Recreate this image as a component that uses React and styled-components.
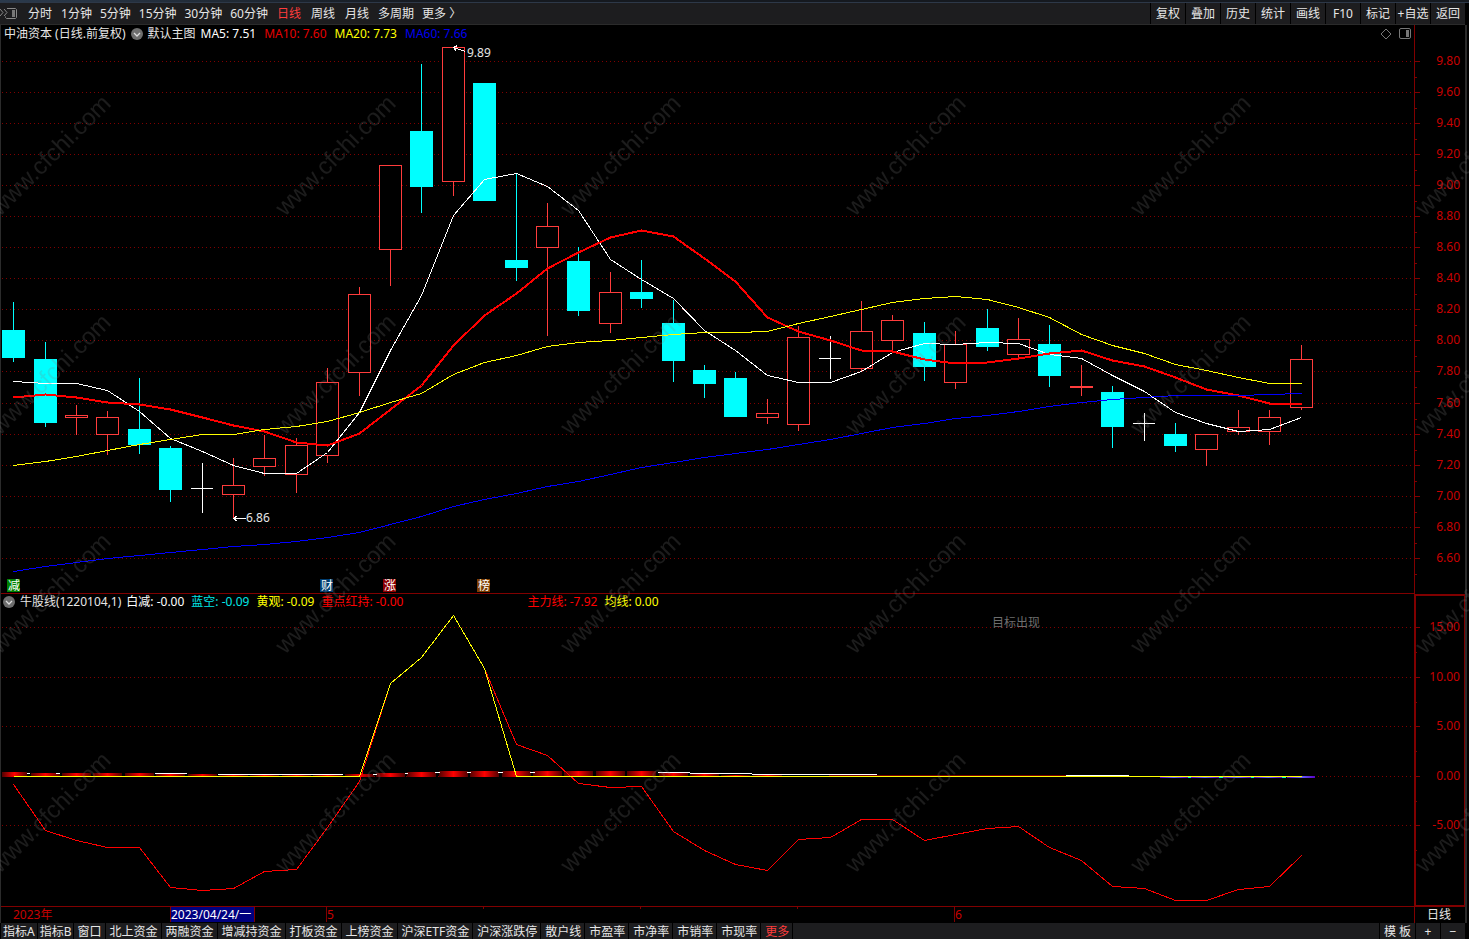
import React from "react";
import styled, { createGlobalStyle, css } from "styled-components";

const GlobalStyle = createGlobalStyle`
  *, *::before, *::after { box-sizing: border-box; }
  body {
    margin: 0;
    background: #000;
    color: #e6e6e6;
    font-family: "Noto Sans", "Noto Sans CJK SC", sans-serif;
    font-size: 12px;
    line-height: 16px;
  }
  button { font: inherit; color: inherit; border: 0; margin: 0; cursor: pointer; }
`;

const colors = {
  line: "#800000",
  axisText: "#c80000",
  bar: "#1d1d1f",
  edge: "#2b2b2b",
  up: "#ff3c3c",
  down: "#00ffff",
};

/* ---------- data ---------- */

const periods = [
  { label: "分时", wide: true },
  { label: "1分钟" },
  { label: "5分钟" },
  { label: "15分钟" },
  { label: "30分钟" },
  { label: "60分钟" },
  { label: "日线", active: true, wide: true },
  { label: "周线", wide: true },
  { label: "月线", wide: true },
  { label: "多周期" },
  { label: "更多 〉" },
];

const tools = ["复权", "叠加", "历史", "统计", "画线", "F10", "标记", "+自选", "返回"];

const indicatorTabs = [
  { label: "指标A", pad: 2 },
  { label: "指标B", pad: 2 },
  { label: "窗口", pad: 3 },
  { label: "北上资金" },
  { label: "两融资金" },
  { label: "增减持资金" },
  { label: "打板资金" },
  { label: "上榜资金" },
  { label: "沪深ETF资金" },
  { label: "沪深涨跌停" },
  { label: "散户线" },
  { label: "市盈率" },
  { label: "市净率" },
  { label: "市销率" },
  { label: "市现率" },
  { label: "更多", active: true },
];

// kind, high, body top, body bottom, low
const candles = [
  ["d", 302, 330, 358, 362], ["d", 342, 359, 423, 427], ["u", 405, 415, 418, 435],
  ["u", 411, 417, 435, 455], ["d", 378, 429, 445, 454], ["d", 446, 448, 490, 502],
  ["n", 463, 488, 489, 513], ["u", 458, 485, 495, 518], ["u", 435, 458, 467, 476],
  ["u", 438, 445, 475, 493], ["u", 368, 382, 456, 463], ["u", 287, 294, 373, 396],
  ["u", 165, 165, 250, 286], ["d", 64, 131, 187, 213], ["u", 47, 47, 182, 196],
  ["d", 83, 83, 201, 201], ["d", 173, 260, 268, 281], ["u", 203, 226, 248, 336],
  ["d", 247, 261, 311, 316], ["u", 272, 292, 324, 333], ["d", 260, 292, 299, 308],
  ["d", 300, 323, 361, 382], ["d", 365, 370, 384, 398], ["d", 372, 378, 417, 417],
  ["u", 399, 413, 418, 424], ["u", 326, 337, 425, 431], ["n", 336, 358, 359, 379],
  ["u", 301, 331, 369, 371], ["u", 315, 320, 341, 351], ["d", 322, 333, 367, 381],
  ["u", 331, 344, 383, 389], ["d", 309, 328, 347, 351], ["u", 318, 339, 355, 357],
  ["d", 325, 344, 376, 387], ["u", 365, 386, 388, 396], ["d", 386, 392, 427, 448],
  ["n", 413, 423, 424, 441], ["d", 423, 434, 446, 452], ["u", 434, 434, 450, 466],
  ["u", 410, 427, 432, 435], ["u", 410, 417, 432, 445], ["u", 345, 359, 408, 410],
];

const ma5 = [381, 383, 383, 390, 411, 438, 451, 465, 473, 473, 452, 412, 350, 295, 215, 179, 173, 186, 210, 259, 279, 298, 330, 350, 375, 382, 382, 371, 352, 343, 344, 342, 343, 354, 358, 375, 391, 412, 423, 431, 429, 417];
const ma10 = [397, 394, 397, 402, 404, 409, 417, 425, 431, 442, 445, 433, 409, 385, 345, 315, 293, 268, 252, 237, 230, 236, 258, 281, 317, 331, 340, 350, 351, 359, 363, 362, 358, 353, 350, 360, 366, 377, 389, 395, 403, 403];
const ma20 = [465, 461, 456, 450, 444, 439, 434, 434, 429, 426, 421, 412, 402, 393, 374, 362, 355, 346, 342, 340, 337, 334, 332, 332, 331, 323, 316, 309, 302, 298, 296, 299, 307, 317, 334, 345, 353, 364, 370, 377, 383, 383];
const ma60 = [571, 566, 562, 558, 555, 552, 549, 546, 544, 541, 537, 532, 524, 516, 506, 499, 493, 486, 481, 474, 467, 462, 457, 453, 449, 444, 439, 433, 427, 423, 418, 415, 411, 406, 402, 399, 397, 395, 395, 395, 394, 393];
const mainForce = [784, 830, 840, 847, 847, 887, 890, 888, 871, 869, 827, 781, 683, 657, 615, 668, 744, 755, 783, 787, 786, 831, 850, 864, 870, 839, 837, 819, 819, 840, 834, 828, 826, 847, 860, 886, 888, 900, 900, 889, 886, 855];
const average = ma5.map((_, i) => ({ 12: 683, 13: 657, 14: 615, 15: 668 }[i] || 776));
// top edge of the glowing bars that sit on the zero line
const glowTops = [772, 773, 773, 773, 773, 774, 774, 775, 775, 775, 775, 774, 773, 772, 771, 771, 771, 771, 771, 771, 771, 773, 774, 775, 775];
const whiteRuns = [[27, 30, 773], [56, 60, 773], [155, 187, 773], [218, 343, 774], [373, 377, 774], [405, 408, 773], [435, 440, 772], [467, 471, 772], [498, 503, 772], [530, 535, 772], [658, 690, 772], [690, 752, 773], [752, 877, 774], [1066, 1129, 775]];

const priceLevels = Array.from({ length: 17 }, (_, i) => ({
  label: (9.8 - i * 0.2).toFixed(2),
  y: Math.floor(61.4 + i * 31.06),
}));
const indicatorLevels = [15, 10, 5, 0, -5].map((v, i) => ({
  label: v.toFixed(2),
  y: [627, 677, 726, 776, 825][i],
}));

const xAt = (i) => Math.floor(13.72 + 31.4 * i);
const points = (series) => series.map((y, i) => `${xAt(i)},${y}`).join(" ");

/* ---------- styled parts ---------- */

const Page = styled.div`
  position: relative;
  display: flex;
  flex-direction: column;
  min-height: 100vh;
  overflow: hidden;
`;

const WindowEdge = styled.div`
  height: 3px;
  background: linear-gradient(90deg, #2b3a4c, #15191f 30%, #15191f);
  border-bottom: 1px solid #2d3848;
`;

const Toolbar = styled.header`
  display: flex;
  align-items: stretch;
  height: 22px;
  margin-right: 4px;
  background: ${colors.bar};
  border-bottom: 1px solid ${colors.edge};
`;

const PeriodNav = styled.nav`
  display: flex;
  flex: 1;
`;

const SidebarToggle = styled.button`
  width: 23px;
  padding: 0;
  background: none;
  display: flex;
  align-items: center;
`;

const PeriodButton = styled.button`
  padding: 0 ${(p) => (p.$wide ? 5 : 4)}px;
  background: none;
  white-space: nowrap;
  color: ${(p) => (p.$active ? colors.up : "#e6e6e6")};
`;

const ToolGroup = styled.div`
  display: flex;
  gap: 1px;
  padding-left: 1px;
  background: #000;
`;

const ToolButton = styled.button`
  width: 34px;
  padding: 0;
  background: ${colors.bar};
  white-space: nowrap;
`;

const Workspace = styled.main`
  flex: 1;
  margin-right: 2px;
  border-left: 1px solid ${colors.edge};
  border-right: 2px solid ${colors.edge};
`;

const PanelRow = styled.section`
  display: grid;
  grid-template-columns: minmax(0, 1fr) 51px;
`;

const Plot = styled.div`
  min-width: 0;
  border-bottom: 1px solid ${colors.line};
`;

const Legend = styled.div`
  display: flex;
  align-items: center;
  gap: 5px;
  height: ${(p) => p.$height}px;
  padding-left: ${(p) => p.$inset}px;
  padding-right: 3px;
  white-space: nowrap;
`;

const LegendItem = styled.span`
  color: ${(p) => p.$color || "#e6e6e6"};
`;

const LegendValues = styled.div`
  display: flex;
  gap: 8px;
`;

const IndicatorValues = styled(LegendValues)`
  gap: 7px;
`;

const ForceValues = styled(IndicatorValues)`
  margin-left: 119px;
`;

const LegendTools = styled.div`
  display: flex;
  align-items: center;
  gap: 7px;
  margin-left: auto;
`;

const IconButton = styled.button`
  display: flex;
  padding: 0;
  background: none;
`;

const Chart = styled.svg`
  display: block;
  width: 100%;
  height: ${(p) => p.$height}px;
  overflow: visible;
  shape-rendering: crispEdges;
`;

const boxed = css`
  border: 2px solid ${colors.line};
  border-right-width: 1px;
`;

const Axis = styled.div`
  border-left: 1px solid ${colors.line};
  ${(p) => p.$boxed && boxed}
`;

const AxisCaption = styled.div`
  padding-left: 12px;
  border-left: 1px solid ${colors.line};
  line-height: 16px;
`;

const BottomBar = styled.footer`
  display: flex;
  gap: 1px;
  height: 16px;
  margin-right: 4px;
  padding-left: 1px;
  background: #000;
`;

const TabButton = styled.button`
  padding: 2px ${(p) => p.$pad || 3}px 0 ${(p) => p.$pad || 4}px;
  background: ${colors.bar};
  white-space: nowrap;
  line-height: 14px;
  color: ${(p) => (p.$active ? colors.up : "#e6e6e6")};
`;

const BarFill = styled.div`
  flex: 1;
  background: ${colors.bar};
`;

const ZoomButton = styled(TabButton)`
  width: 24px;
  padding: 2px 0 0;
`;

const WatermarkLayer = styled.svg`
  position: absolute;
  inset: 0;
  width: 100%;
  height: 100%;
  pointer-events: none;
`;

/* ---------- drawings ---------- */

function PanelIcon() {
  return (
    <svg width="12" height="12" viewBox="0 0 12 12" fill="none">
      <rect x="0.5" y="0.5" width="11" height="10" rx="1.5" stroke="#777" />
      <rect x="7" y="2" width="3" height="7" fill="#777" />
    </svg>
  );
}

function SidebarIcon() {
  return (
    <svg width="18" height="12" viewBox="0 0 18 12" fill="none" stroke="#888">
      <path d="M0 1l3 3.500-3 3.500M4 1l3 3.500-3 3.500" />
      <path d="M7 .5h8.500l1 1v8l-1 1h-9l-1-1v-1" />
      <rect x="12" y="2" width="3" height="7" fill="#777" stroke="none" />
    </svg>
  );
}

function ChevronCircle() {
  return (
    <svg width="12" height="12" viewBox="0 0 12 12">
      <circle cx="6" cy="6" r="6" fill="#6e6e6e" />
      <path d="M3 5l3 3 3-3" fill="none" stroke="#ddd" strokeWidth="1.300" />
    </svg>
  );
}

function DiamondIcon() {
  return (
    <svg width="12" height="12" viewBox="0 0 12 12">
      <path d="M6 1l5 5-5 5-5-5z" fill="none" stroke="#777" />
    </svg>
  );
}

function GridLines({ levels }) {
  return levels.map((l) => (
    <line key={l.label} x1="2" x2="100%" y1={l.y + 0.5} y2={l.y + 0.5} stroke="#800000" strokeDasharray="1 3" />
  ));
}

function Candle({ x, data }) {
  const [kind, high, top, bottom, low] = data;
  if (kind === "n") {
    return (
      <g fill="#fff">
        <rect x={x} y={high} width="1" height={low - high} />
        <rect x={x - 11} y={top} width="22" height="1" />
      </g>
    );
  }
  if (kind === "d") {
    return (
      <g fill={colors.down}>
        <rect x={x} y={high} width="1" height={low - high} />
        <rect x={x - 11} y={top} width="23" height={bottom - top} />
      </g>
    );
  }
  return (
    <g>
      <rect x={x} y={high} width="1" height={low - high} fill={colors.up} />
      <rect x={x - 11} y={top} width="23" height={bottom - top} fill={colors.up} />
      {bottom - top > 2 && (
        <rect x={x - 10} y={top + 1} width="21" height={bottom - top - 2} fill="#000" />
      )}
    </g>
  );
}

function EventBadge({ x, label, color }) {
  return (
    <g>
      <rect x={x} y="579" width="13" height="13" fill={color} />
      <text x={x + 1} y="590" fontSize="12" fill="#fff">{label}</text>
    </g>
  );
}

function PriceChart() {
  return (
    <Chart $height={550} role="img" aria-label="中油资本 日线">
      <g transform="translate(-1 -43)">
        <GridLines levels={priceLevels} />
        {candles.map((c, i) => <Candle key={i} x={xAt(i)} data={c} />)}
        <g fill="none" transform="translate(0.5 0.5)">
          <polyline points={points(ma5)} stroke="#fff" />
          <polyline points={points(ma10)} stroke="#ff0000" strokeWidth="2" />
          <polyline points={points(ma20)} stroke="#ffff00" />
          <polyline points={points(ma60)} stroke="#0000ff" />
          <path d="M453 47l12 4M457 45l-4 2 3 4M233 518h12M237 515l-4 3 4 3" stroke="#fff" />
        </g>
        <text x="467" y="57" fontSize="12" fill="#e6e6e6">9.89</text>
        <text x="246" y="522" fontSize="12" fill="#e6e6e6">6.86</text>
        <EventBadge x={7} label="减" color="#008000" />
        <EventBadge x={320} label="财" color="#003c6e" />
        <EventBadge x={383} label="涨" color="#8c0000" />
        <EventBadge x={477} label="榜" color="#7d3c00" />
      </g>
    </Chart>
  );
}

function IndicatorChart() {
  return (
    <Chart $height={296} role="img" aria-label="牛股线">
      <defs>
        <linearGradient id="glow">
          <stop offset="0" stopColor="#500000" />
          <stop offset="0.5" stopColor="#ff0000" />
          <stop offset="1" stopColor="#500000" />
        </linearGradient>
        <linearGradient id="cold">
          <stop offset="0" stopColor="#5a00c8" />
          <stop offset="0.5" stopColor="#6464ff" />
          <stop offset="1" stopColor="#5a00c8" />
        </linearGradient>
      </defs>
      <g transform="translate(-1 -610)">
        <GridLines levels={indicatorLevels} />
        {glowTops.map((top, i) => (
          <rect key={i} x={i ? xAt(i) - 14 : 2} y={top} width={i ? 29 : 25} height={777 - top} fill="url(#glow)" />
        ))}
        <rect x="829" y="775" width="237" height="1" fill="#780000" />
        {whiteRuns.map(([from, to, y]) => (
          <rect key={from} x={from} y={y} width={to - from} height="1" fill="#fff" />
        ))}
        {[37, 38, 39, 40].map((i) => (
          <g key={i}>
            <rect x={xAt(i) - 15} y="777" width="28" height="1" fill="url(#cold)" />
            <rect x={xAt(i) + 13} y="777" width="4" height="1" fill="#00ffc8" />
          </g>
        ))}
        <rect x="1287" y="776" width="28" height="2" fill="url(#cold)" />
        <g fill="none" transform="translate(0.5 0.5)">
          <polyline points={points(mainForce)} stroke="#ff0000" />
          <polyline points={points(average)} stroke="#ffff00" />
        </g>
        <text x="992" y="627" fontSize="12" fill="#6e6e6e">目标出现</text>
      </g>
    </Chart>
  );
}

function PriceAxis() {
  return (
    <Axis>
      <Chart $height={569}>
        <g transform="translate(0 -25)">
          {priceLevels.map((l) => (
            <g key={l.label}>
              <rect x="0" y={l.y} width="5" height="1" fill={colors.line} />
              <rect x="0" y={l.y + 16} width="2" height="1" fill={colors.line} />
              <text x="45" y={l.y + 4} fontSize="12" textAnchor="end" fill={colors.axisText}>{l.label}</text>
            </g>
          ))}
        </g>
      </Chart>
    </Axis>
  );
}

function IndicatorAxis() {
  return (
    <Axis $boxed>
      <Chart $height={309}>
        <g transform="translate(0 -596)">
          {indicatorLevels.map((l) => (
            <g key={l.label}>
              <rect x="0" y={l.y} width="4" height="1" fill={colors.line} />
              <rect x="0" y={l.y + 25} width="1" height="1" fill={colors.line} />
              <text x="44" y={l.y + 4} fontSize="12" textAnchor="end" fill={colors.axisText}>{l.label}</text>
            </g>
          ))}
        </g>
      </Chart>
    </Axis>
  );
}

function TimeAxis() {
  return (
    <Chart $height={16}>
      <g transform="translate(-1 0)" fontSize="12">
        <text x="13" y="12" fill={colors.axisText}>2023年</text>
        <rect x="170" y="0" width="85" height="15" fill={colors.line} />
        <rect x="171" y="0" width="83" height="15" fill="#000080" />
        <text x="171" y="12" fill="#fff">2023/04/24/一</text>
        {[327, 955].map((x) => <rect key={x} x={x - 1} y="0" width="1" height="15" fill={colors.line} />)}
        {[483, 640, 797].map((x) => <rect key={x} x={x} y="0" width="1" height="2" fill={colors.line} />)}
        <text x="327" y="12" fill={colors.axisText}>5</text>
        <text x="955" y="12" fill={colors.axisText}>6</text>
      </g>
    </Chart>
  );
}

function Watermark() {
  return (
    <WatermarkLayer aria-hidden="true">
      <defs>
        <pattern id="mark" x="-13" y="2" width="285" height="219" patternUnits="userSpaceOnUse">
          <text
            transform="translate(13 215) rotate(-45)"
            fontFamily="Liberation Sans, sans-serif"
            fontSize="24"
            fill="#808080"
            fillOpacity="0.22"
          >
            www.cfchi.com
          </text>
        </pattern>
      </defs>
      <rect width="100%" height="100%" fill="url(#mark)" />
    </WatermarkLayer>
  );
}

/* ---------- page ---------- */

export default function App() {
  return (
    <Page>
      <GlobalStyle />
      <WindowEdge />
      <Toolbar>
        <PeriodNav>
          <SidebarToggle aria-label="侧栏"><SidebarIcon /></SidebarToggle>
          {periods.map((p) => (
            <PeriodButton key={p.label} $active={p.active} $wide={p.wide}>{p.label}</PeriodButton>
          ))}
        </PeriodNav>
        <ToolGroup>
          {tools.map((t) => <ToolButton key={t}>{t}</ToolButton>)}
        </ToolGroup>
      </Toolbar>

      <Workspace>
        <PanelRow>
          <Plot>
            <Legend $height={18} $inset={3}>
              <LegendItem>中油资本 (日线.前复权)</LegendItem>
              <IconButton aria-label="主图菜单"><ChevronCircle /></IconButton>
              <LegendItem>默认主图</LegendItem>
              <LegendValues>
                <LegendItem $color="#fff">MA5: 7.51</LegendItem>
                <LegendItem $color="#e60000">MA10: 7.60</LegendItem>
                <LegendItem $color="#ffff00">MA20: 7.73</LegendItem>
                <LegendItem $color="#0000f0">MA60: 7.66</LegendItem>
              </LegendValues>
              <LegendTools>
                <IconButton aria-label="标记点"><DiamondIcon /></IconButton>
                <IconButton aria-label="面板"><PanelIcon /></IconButton>
              </LegendTools>
            </Legend>
            <PriceChart />
          </Plot>
          <PriceAxis />
        </PanelRow>

        <PanelRow>
          <Plot>
            <Legend $height={16} $inset={2}>
              <IconButton aria-label="副图菜单"><ChevronCircle /></IconButton>
              <LegendItem>牛股线(1220104,1)</LegendItem>
              <IndicatorValues>
                <LegendItem $color="#fff">白减: -0.00</LegendItem>
                <LegendItem $color="#00e6e6">蓝空: -0.09</LegendItem>
                <LegendItem $color="#ffff00">黄观: -0.09</LegendItem>
                <LegendItem $color="#ff0000">重点红持: -0.00</LegendItem>
              </IndicatorValues>
              <ForceValues>
                <LegendItem $color="#ff0000">主力线: -7.92</LegendItem>
                <LegendItem $color="#ffff00">均线: 0.00</LegendItem>
              </ForceValues>
            </Legend>
            <IndicatorChart />
          </Plot>
          <IndicatorAxis />
        </PanelRow>

        <PanelRow>
          <TimeAxis />
          <AxisCaption>日线</AxisCaption>
        </PanelRow>
      </Workspace>

      <BottomBar>
        {indicatorTabs.map((t) => (
          <TabButton key={t.label} $pad={t.pad} $active={t.active}>{t.label}</TabButton>
        ))}
        <BarFill />
        <TabButton $pad={4}>模 板</TabButton>
        <ZoomButton aria-label="放大">+</ZoomButton>
        <ZoomButton aria-label="缩小">−</ZoomButton>
      </BottomBar>
      <Watermark />
    </Page>
  );
}
